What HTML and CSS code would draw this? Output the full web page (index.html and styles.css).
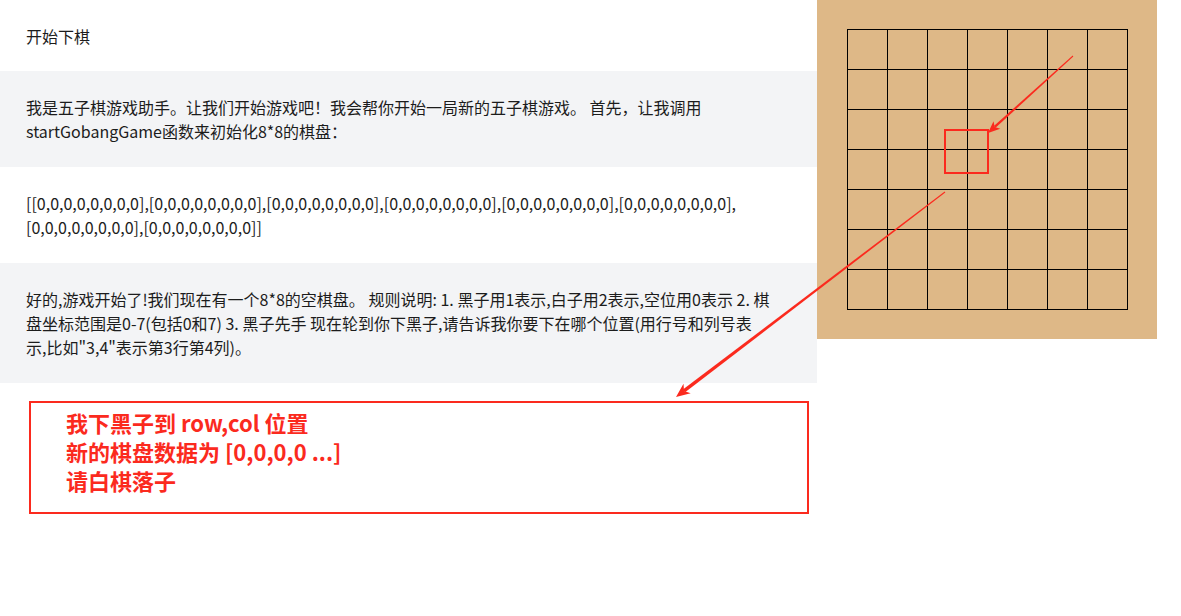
FILE: index.html
```html
<!DOCTYPE html>
<html lang="zh-CN">
<head>
<meta charset="utf-8">
<title>五子棋</title>
<link rel="stylesheet" href="styles.css">
</head>
<body>
<div class="page">
  <div class="chat">
    <div class="msg msg-user msg-first">开始下棋</div>
    <div class="msg msg-bot">我是五子棋游戏助手。让我们开始游戏吧！我会帮你开始一局新的五子棋游戏。 首先，让我调用<br>startGobangGame函数来初始化8*8的棋盘：</div>
    <div class="msg msg-user">[[0,0,0,0,0,0,0,0],[0,0,0,0,0,0,0,0],[0,0,0,0,0,0,0,0],[0,0,0,0,0,0,0,0],[0,0,0,0,0,0,0,0],[0,0,0,0,0,0,0,0],<br>[0,0,0,0,0,0,0,0],[0,0,0,0,0,0,0,0]]</div>
    <div class="msg msg-bot">好的,游戏开始了!我们现在有一个8*8的空棋盘。 规则说明: 1. 黑子用1表示,白子用2表示,空位用0表示 2. 棋<br>盘坐标范围是0-7(包括0和7) 3. 黑子先手 现在轮到你下黑子,请告诉我你要下在哪个位置(用行号和列号表<br>示,比如"3,4"表示第3行第4列)。</div>
    <div class="note">
      <div>我下黑子到 row,col 位置</div>
      <div>新的棋盘数据为 [0,0,0,0 ...]</div>
      <div>请白棋落子</div>
    </div>
  </div>
  <div class="board">
    <svg class="grid" width="340" height="339" viewBox="0 0 340 339">
      <g stroke="#000" stroke-width="1" shape-rendering="crispEdges">
        <line x1="30" y1="29.5" x2="310" y2="29.5"/>
        <line x1="30" y1="69.5" x2="310" y2="69.5"/>
        <line x1="30" y1="109.5" x2="310" y2="109.5"/>
        <line x1="30" y1="149.5" x2="310" y2="149.5"/>
        <line x1="30" y1="189.5" x2="310" y2="189.5"/>
        <line x1="30" y1="229.5" x2="310" y2="229.5"/>
        <line x1="30" y1="269.5" x2="310" y2="269.5"/>
        <line x1="30" y1="309.5" x2="310" y2="309.5"/>
        <line x1="30.5" y1="29" x2="30.5" y2="310"/>
        <line x1="70.5" y1="29" x2="70.5" y2="310"/>
        <line x1="110.5" y1="29" x2="110.5" y2="310"/>
        <line x1="150.5" y1="29" x2="150.5" y2="310"/>
        <line x1="190.5" y1="29" x2="190.5" y2="310"/>
        <line x1="230.5" y1="29" x2="230.5" y2="310"/>
        <line x1="270.5" y1="29" x2="270.5" y2="310"/>
        <line x1="310.5" y1="29" x2="310.5" y2="310"/>
      </g>
    </svg>
  </div>
</div>
<svg class="marks" width="1181" height="616" viewBox="0 0 1181 616">
  <rect x="945" y="130" width="43" height="43" fill="none" stroke="#fb2a1e" stroke-width="2"/>
  <polygon fill="#fb2a1e" points="1073.3,56.4 1072.7,55.6 993.9,126.0 995.5,127.8"/>
  <polygon fill="#fb2a1e" points="988,133 1000.3,128.7 994.7,126.9 993.5,121.2"/>
  <polygon fill="#fb2a1e" points="945.3,192.4 944.7,191.6 682.9,389.5 685.1,392.3"/>
  <polygon fill="#fb2a1e" points="676,397 690.7,393.3 684.0,390.9 683.5,383.7"/>
</svg>
</body>
</html>
```

FILE: styles.css
```css
html, body {
  margin: 0;
  padding: 0;
  background: #ffffff;
}

body {
  position: relative;
  width: 1181px;
  height: 616px;
  overflow: hidden;
  font-family: "Noto Sans CJK SC", "Noto Sans", sans-serif;
  color: #1c1c1c;
}

.page {
  display: flex;
  align-items: flex-start;
}

.chat {
  width: 817px;
  display: flex;
  flex-direction: column;
}

.msg {
  padding: 24px 26px;
  font-size: 16px;
  line-height: 24px;
  white-space: nowrap;
}

.msg-first {
  padding-bottom: 23px;
}

.msg-user {
  background: #ffffff;
}

.msg-bot {
  background: #f3f4f6;
}

.note {
  margin: 18px 0 0 29px;
  border: 2px solid #fb2a1e;
  padding: 5px 0 17px 35px;
  width: 741px;
  color: #fb2a1e;
  font-family: "Noto Sans CJK SC", sans-serif;
  font-size: 22px;
  font-weight: 600;
  line-height: 29px;
}

.board {
  width: 340px;
  height: 339px;
  background: #deb887;
  flex: none;
}

.grid {
  display: block;
}

.marks {
  position: absolute;
  left: 0;
  top: 0;
  pointer-events: none;
}
```
